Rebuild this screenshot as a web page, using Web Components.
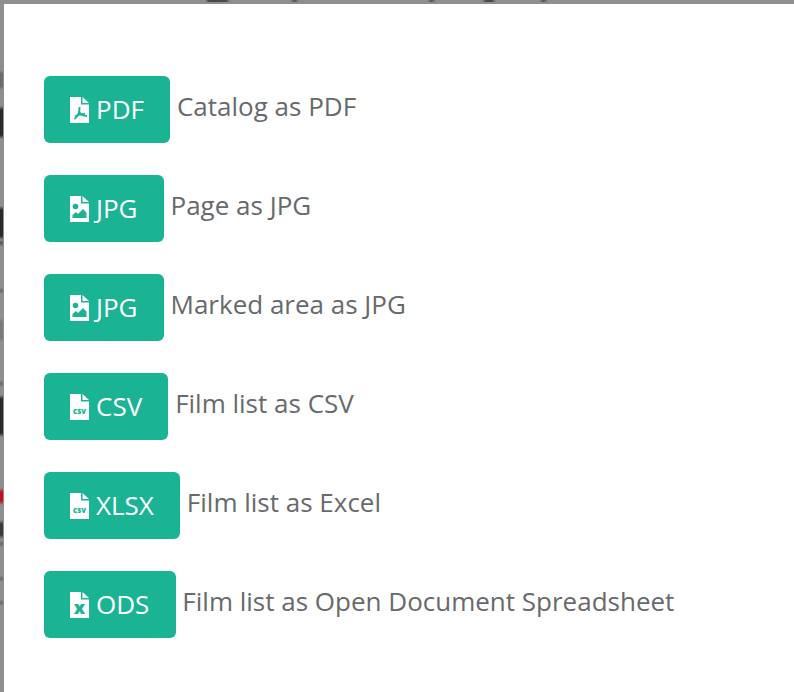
<!DOCTYPE html>
<html lang="en">
<head>
<meta charset="UTF-8">
<title>Export</title>
<style>
    html, body { margin: 0; height: 100%; overflow: hidden; }
    body { background: #8f8f8f; font-family: "Open Sans", sans-serif; }
</style>
</head>
<body>
<template id="export-dialog">
    <style>
        :host {
            display: block;
            box-sizing: border-box;
            height: 692px;
            padding: 4px 0 0 4px;
            background-repeat: no-repeat;
        }
        .box {
            box-sizing: border-box;
            height: 100%;
            background: #fff;
            padding: 72px 40px 0;
            display: flex;
            flex-direction: column;
            gap: 32px;
        }
    </style>
    <div class="box"><slot></slot></div>
</template>

<template id="export-row">
    <style>
        :host {
            display: flex;
            align-items: center;
            gap: 6.800px;
            height: 67px;
            font: 26px/35px "Open Sans", sans-serif;
            color: #676a6c;
        }
        button {
            display: flex;
            align-items: center;
            height: 67px;
            padding: 0 26.200px 0 26px;
            border: 0;
            border-radius: 6px;
            background: #1ab394;
            color: #fff;
            font: inherit;
        }
        svg { width: 19px; height: 26px; margin-right: 7px; fill: #fff; flex: none; overflow: visible; }
        .text { position: relative; top: -3px; }
    </style>
    <button><svg viewBox="0 0 19 26"><path d="M0 0H11V7.500H19V26H0Z"/><path d="M12.500 0L19 6H12.500Z"/><g id="glyph"></g></svg><span class="label"></span></button>
    <span class="text"><slot></slot></span>
</template>

<script>
    const glyphs = {
        pdf: '<path d="M9.500 10C9.800 14 8 19 4.500 22M9.500 15C10.500 17.500 13 19 17 19M5 19.500C8 17.500 11 17 15 17" fill="none" stroke="#1ab394" stroke-width="1.800"/>',
        jpg: '<circle cx="5.500" cy="10.500" r="2.800" fill="#1ab394"/><path d="M2.500 22V19L6 16L8 18L13 13L16.500 16.500V22Z" fill="#1ab394"/>',
        csv: '<text x="9.500" y="20" text-anchor="middle" font-family="Open Sans" font-size="9" font-weight="800" fill="#1ab394" textLength="13" lengthAdjust="spacingAndGlyphs">csv</text>',
        x: '<text x="9.500" y="22" text-anchor="middle" font-family="Open Sans" font-size="18" font-weight="800" fill="#1ab394">x</text>'
    };

    // bits of the page behind the dialog that show along its edges: [from, to, colour]
    const leftBits = [
        [72, 88, '#6a6a6a'], [108, 137, '#2a2a2a'], [208, 238, '#2a2a2a'], [240, 245, '#5a5a5a'],
        [289, 292, '#6a6a6a'], [320, 340, '#7a7a7a'], [382, 385, '#6a6a6a'], [397, 435, '#2a2a2a'],
        [490, 503, '#c4121c'], [522, 537, '#3a3a3a'], [542, 545, '#6a6a6a'], [577, 580, '#6a6a6a'], [601, 604, '#6a6a6a']
    ];
    const topBits = [[207, 228, '#4a4a4a'], [292, 297, '#5a5a5a'], [429, 434, '#5a5a5a'], [484, 494, '#4a4a4a'], [541, 546, '#5a5a5a']];

    function stops(bits, size) {
        const base = '#8f8f8f';
        const parts = [base + ' 0'];
        bits.forEach(([from, to, colour]) => {
            parts.push(`${base} ${from - 2}px`, `${colour} ${from + 2}px`, `${colour} ${to - 2}px`, `${base} ${to + 2}px`);
        });
        parts.push(`${base} ${size}px`);
        return parts.join(',');
    }

    class ExportDialog extends HTMLElement {
        constructor() {
            super();
            this.attachShadow({mode: 'open'});
            const template = document.getElementById('export-dialog');
            this.shadowRoot.appendChild(document.importNode(template.content, true));
        }
        connectedCallback() {
            this.style.backgroundImage = `linear-gradient(to bottom,${stops(leftBits, 692)}),linear-gradient(to right,${stops(topBits, 794)})`;
            this.style.backgroundSize = '3px 100%, 100% 2px';
        }
    }
    customElements.define('export-dialog', ExportDialog);

    class ExportRow extends HTMLElement {
        constructor() {
            super();
            this.attachShadow({mode: 'open'});
            const template = document.getElementById('export-row');
            this.shadowRoot.appendChild(document.importNode(template.content, true));
        }
        connectedCallback() {
            this.shadowRoot.querySelector('.label').textContent = this.getAttribute('label');
            this.shadowRoot.querySelector('#glyph').innerHTML = glyphs[this.getAttribute('icon')];
        }
    }
    customElements.define('export-row', ExportRow);
</script>

<export-dialog>
    <export-row icon="pdf" label="PDF">Catalog as PDF</export-row>
    <export-row icon="jpg" label="JPG">Page as JPG</export-row>
    <export-row icon="jpg" label="JPG">Marked area as JPG</export-row>
    <export-row icon="csv" label="CSV">Film list as CSV</export-row>
    <export-row icon="csv" label="XLSX">Film list as Excel</export-row>
    <export-row icon="x" label="ODS">Film list as Open Document Spreadsheet</export-row>
</export-dialog>
</body>
</html>
